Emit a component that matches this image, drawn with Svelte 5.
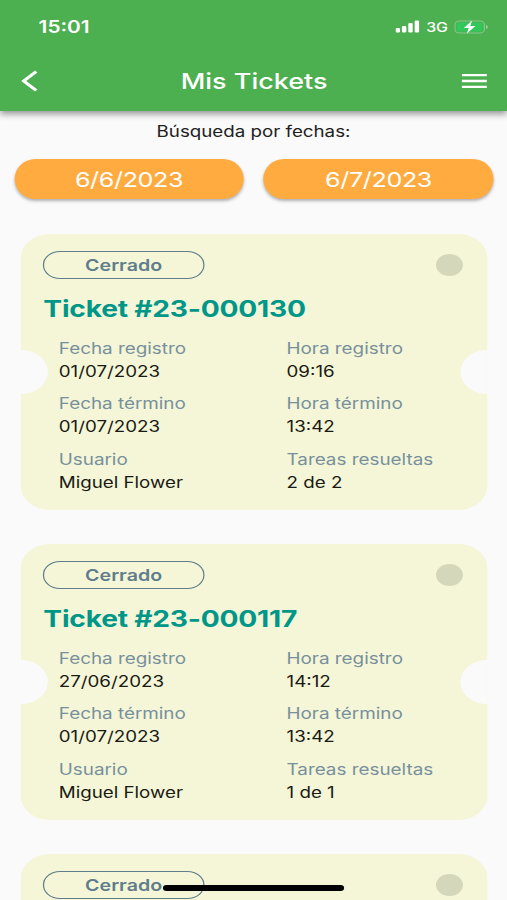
<script lang="ts">
    // Date filters
    const dates = ["6/6/2023", "6/7/2023"];

    // Ticket list
    const tickets = [
        {
            number: "23-000130",
            registered: "01/07/2023",
            registeredTime: "09:16",
            finished: "01/07/2023",
            finishedTime: "13:42",
            user: "Miguel Flower",
            tasks: "2 de 2",
        },
        {
            number: "23-000117",
            registered: "27/06/2023",
            registeredTime: "14:12",
            finished: "01/07/2023",
            finishedTime: "13:42",
            user: "Miguel Flower",
            tasks: "1 de 1",
        },
        { number: "" },
    ];
</script>

<div class="screen">
    <header class="app-header">
        <div class="status-bar">
            <span class="clock">15:01</span>
            <div class="status-icons">
                <svg class="signal" width="20" height="13" viewBox="0 0 20 13">
                    <rect x="0" y="8" width="3.6" height="4.5" rx="1" />
                    <rect x="5.2" y="6" width="3.6" height="6.5" rx="1" />
                    <rect x="10.4" y="3" width="3.6" height="9.5" rx="1" />
                    <rect x="15.6" y="0.5" width="3.6" height="12" rx="1" />
                </svg>
                <span class="network">3G</span>
                <svg class="battery" width="28" height="14" viewBox="0 0 28 14">
                    <rect x="0.5" y="1" width="24" height="12" rx="3.5" fill="none" stroke="#86ca88" />
                    <rect x="2" y="2.5" width="21" height="9" rx="2.2" fill="#30c85a" />
                    <path d="M25.8 5v4c1-.4 1.6-1.1 1.6-2s-.6-1.6-1.600-2z" fill="#93d095" />
                    <path d="M14.5 .5L7.800 7.900h3.900L10.300 13.500 17.200 6H13z" fill="#fff" />
                </svg>
            </div>
        </div>
        <div class="nav-bar">
            <button class="icon-button" aria-label="Volver">
                <svg width="14" height="22" viewBox="0 0 14 22">
                    <path d="M12.6 1.500L2.400 11l10.200 9.500" fill="none" stroke="#fff" stroke-width="2.900" />
                </svg>
            </button>
            <h1>Mis Tickets</h1>
            <button class="icon-button" aria-label="Menú">
                <svg width="21" height="14" viewBox="0 0 21 14">
                    <path d="M0 1.200h20.500M0 7h20.500M0 12.800h20.500" stroke="#fff" stroke-width="2.300" />
                </svg>
            </button>
        </div>
    </header>

    <main>
        <p class="search-label">Búsqueda por fechas:</p>
        <div class="date-filters">
            {#each dates as date}
                <button class="date-button">{date}</button>
            {/each}
        </div>

        <div class="ticket-list">
            {#each tickets as ticket}
                <article class="ticket">
                    <div class="ticket-top">
                        <span class="badge">Cerrado</span>
                        <span class="dot"></span>
                    </div>
                    {#if ticket.number}
                        <h2>Ticket #{ticket.number}</h2>
                        <dl>
                            <div>
                                <dt>Fecha registro</dt>
                                <dd>{ticket.registered}</dd>
                            </div>
                            <div>
                                <dt>Hora registro</dt>
                                <dd>{ticket.registeredTime}</dd>
                            </div>
                            <div>
                                <dt>Fecha término</dt>
                                <dd>{ticket.finished}</dd>
                            </div>
                            <div>
                                <dt>Hora término</dt>
                                <dd>{ticket.finishedTime}</dd>
                            </div>
                            <div>
                                <dt>Usuario</dt>
                                <dd>{ticket.user}</dd>
                            </div>
                            <div>
                                <dt>Tareas resueltas</dt>
                                <dd>{ticket.tasks}</dd>
                            </div>
                        </dl>
                    {/if}
                </article>
            {/each}
        </div>
    </main>

    <div class="home-indicator"></div>
</div>

<style>
    :global(body) {
        overflow: hidden;
        background: #fafafa;
    }

    /* 414pt wide layout, stretched to the 507px viewport */
    .screen {
        position: relative;
        width: 414px;
        height: 900px;
        overflow: hidden;
        background: #fafafa;
        color: #212121;
        font-family: Inter, "Liberation Sans", sans-serif;
        font-size: 16px;
        transform: scaleX(1.22464);
        transform-origin: 0 0;
    }

    button {
        padding: 0;
        border: none;
        font-family: inherit;
        color: #fff;
    }

    .app-header {
        height: 111px;
        background: #4caf50;
        box-shadow: 0 3px 6px rgba(0, 0, 0, 0.42);
        color: #fff;
    }

    .status-bar {
        display: flex;
        align-items: center;
        justify-content: space-between;
        height: 53px;
        padding: 0 15px 0 31.5px;
    }

    .clock {
        font-size: 17px;
        font-weight: 600;
    }

    .status-icons {
        display: flex;
        align-items: center;
    }

    .signal {
        margin-right: 5px;
        fill: #fff;
    }

    .network {
        margin-right: 5.5px;
        font-size: 13px;
        font-weight: 500;
        letter-spacing: -0.2px;
    }

    .nav-bar {
        display: flex;
        align-items: center;
        justify-content: space-between;
        height: 55px;
        padding: 0 16px 0 17px;
    }

    .icon-button {
        display: flex;
        width: 21px;
        background: none;
    }

    h1 {
        margin: 0;
        font-size: 22px;
        font-weight: 500;
    }

    .search-label {
        margin: 0;
        padding-top: 10px;
        font-size: 15.3px;
        line-height: 22px;
        text-align: center;
    }

    .date-filters {
        display: flex;
        gap: 16px;
        padding: 16px 11px 0 11.5px;
    }

    .date-button {
        flex: 1;
        height: 40px;
        border-radius: 17px / 20px;
        background: #ffab40;
        box-shadow: 0 2px 3px rgba(0, 0, 0, 0.3);
        font-size: 20.5px;
        letter-spacing: -0.3px;
    }

    .ticket-list {
        display: flex;
        flex-direction: column;
        gap: 34px;
        padding: 35px 16px 0 17px;
    }

    .ticket {
        box-sizing: border-box;
        height: 276px;
        padding: 17px 20px 0 17.7px;
        border-radius: 24px;
        background:
            radial-gradient(circle at 0 138px, #fafafa 21.7px, transparent 22.3px),
            radial-gradient(circle at 100% 138px, #fafafa 21.7px, transparent 22.3px),
            #f4f6d7;
    }

    .ticket-top {
        display: flex;
        align-items: center;
        justify-content: space-between;
    }

    .badge {
        box-sizing: border-box;
        width: 132.5px;
        height: 28px;
        border: 1px solid #607d8b;
        border-radius: 14px;
        color: #607d8b;
        font-weight: 600;
        line-height: 26px;
        text-align: center;
    }

    .dot {
        width: 22px;
        height: 22px;
        border-radius: 50%;
        background: #d5d7ba;
    }

    h2 {
        margin: 15px 0 0 0.7px;
        color: #009688;
        font-size: 23px;
        font-weight: 700;
        letter-spacing: -0.18px;
        line-height: 30px;
    }

    dl {
        display: grid;
        grid-template-columns: 186px 1fr;
        row-gap: 9.3px;
        margin: 13px 0 0 13.3px;
    }

    dt {
        color: #78909c;
        font-size: 15.4px;
        line-height: 23px;
    }

    dd {
        margin: 0;
        color: #1a1a14;
        font-size: 15.3px;
        line-height: 23px;
    }

    .home-indicator {
        position: absolute;
        top: 885px;
        left: 133.2px;
        width: 148px;
        height: 6px;
        border-radius: 3px;
        background: #000;
    }
</style>
